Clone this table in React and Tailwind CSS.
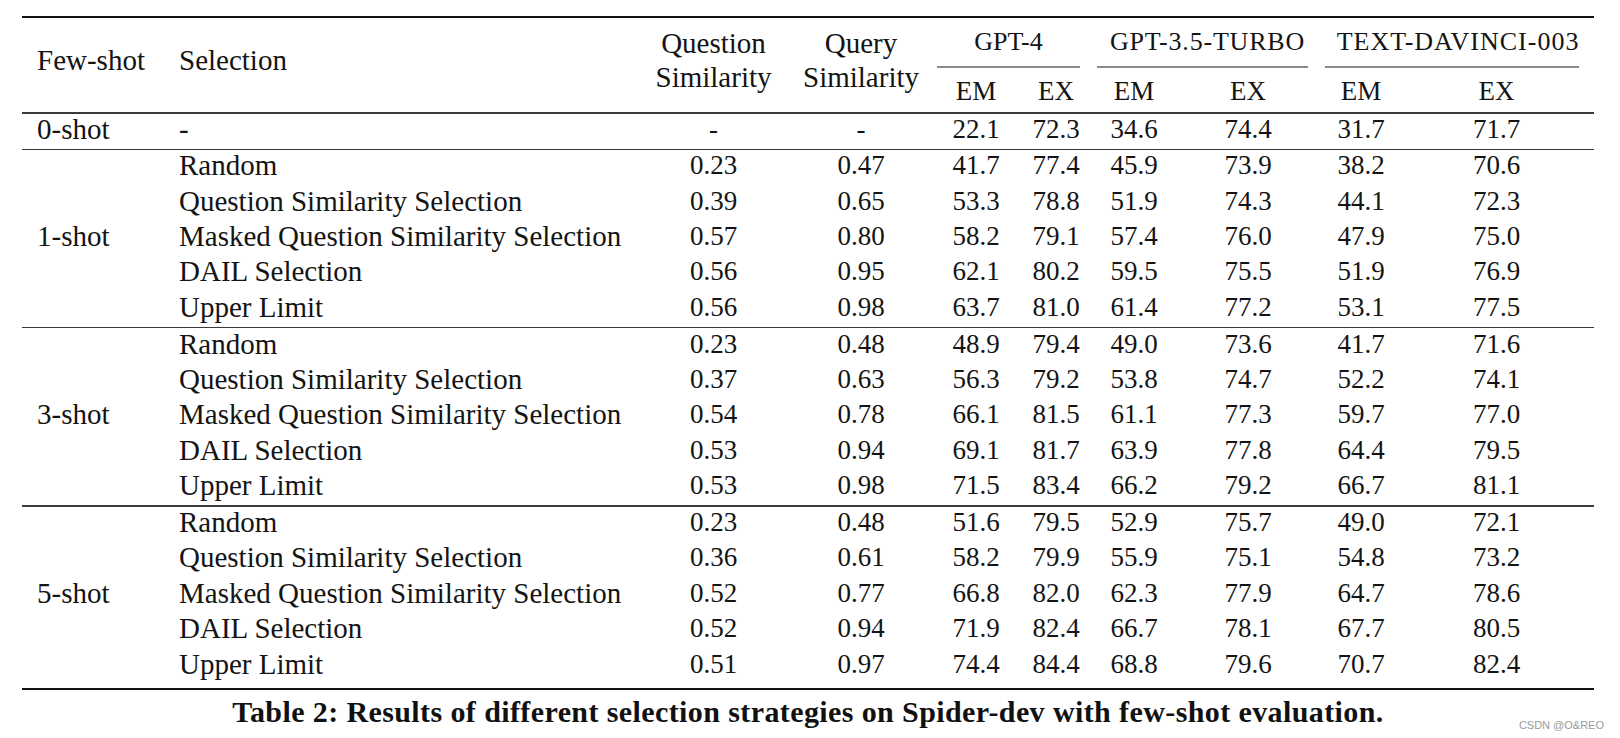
import React from "react";

const W = [143, 475, 147, 148, 82, 78, 78, 150, 76, 195];

const sections = [
  {
    label: "1-shot",
    rows: [
      ["Random", "0.23", "0.47", "41.7", "77.4", "45.9", "73.9", "38.2", "70.6"],
      ["Question Similarity Selection", "0.39", "0.65", "53.3", "78.8", "51.9", "74.3", "44.1", "72.3"],
      ["Masked Question Similarity Selection", "0.57", "0.80", "58.2", "79.1", "57.4", "76.0", "47.9", "75.0"],
      ["DAIL Selection", "0.56", "0.95", "62.1", "80.2", "59.5", "75.5", "51.9", "76.9"],
      ["Upper Limit", "0.56", "0.98", "63.7", "81.0", "61.4", "77.2", "53.1", "77.5"],
    ],
  },
  {
    label: "3-shot",
    rows: [
      ["Random", "0.23", "0.48", "48.9", "79.4", "49.0", "73.6", "41.7", "71.6"],
      ["Question Similarity Selection", "0.37", "0.63", "56.3", "79.2", "53.8", "74.7", "52.2", "74.1"],
      ["Masked Question Similarity Selection", "0.54", "0.78", "66.1", "81.5", "61.1", "77.3", "59.7", "77.0"],
      ["DAIL Selection", "0.53", "0.94", "69.1", "81.7", "63.9", "77.8", "64.4", "79.5"],
      ["Upper Limit", "0.53", "0.98", "71.5", "83.4", "66.2", "79.2", "66.7", "81.1"],
    ],
  },
  {
    label: "5-shot",
    rows: [
      ["Random", "0.23", "0.48", "51.6", "79.5", "52.9", "75.7", "49.0", "72.1"],
      ["Question Similarity Selection", "0.36", "0.61", "58.2", "79.9", "55.9", "75.1", "54.8", "73.2"],
      ["Masked Question Similarity Selection", "0.52", "0.77", "66.8", "82.0", "62.3", "77.9", "64.7", "78.6"],
      ["DAIL Selection", "0.52", "0.94", "71.9", "82.4", "66.7", "78.1", "67.7", "80.5"],
      ["Upper Limit", "0.51", "0.97", "74.4", "84.4", "68.8", "79.6", "70.7", "82.4"],
    ],
  },
];

function NumCells({ vals }) {
  return (
    <>
      {vals.map((v, i) => (
        <div
          key={i}
          style={{ width: W[i + 2] }}
          className="flex shrink-0 items-center justify-center text-[27px] leading-none"
        >
          {v}
        </div>
      ))}
    </>
  );
}

function DataRow({ row }) {
  return (
    <div className="flex h-[35.4px] items-center pb-[4px]">
      <div className="flex w-[475px] shrink-0 items-center whitespace-nowrap pl-[14px] text-[29px] leading-none">
        {row[0]}
      </div>
      <NumCells vals={row.slice(1)} />
    </div>
  );
}

function Group({ label, w1, w2, labelClass }) {
  return (
    <div className="flex shrink-0 flex-col" style={{ width: w1 + w2 }}>
      <div className={"ml-[2px] mr-[15px] flex h-[48px] items-center justify-center whitespace-nowrap leading-none " + labelClass}>
        {label}
      </div>
      <div className="ml-[2px] mr-[15px] h-[1.5px] bg-[#8a8a8a]" />
      <div className="flex h-[44.5px] items-center text-[27px] leading-none">
        <div className="flex shrink-0 justify-center pt-[4px]" style={{ width: w1 }}>EM</div>
        <div className="flex shrink-0 justify-center pt-[4px]" style={{ width: w2 }}>EX</div>
      </div>
    </div>
  );
}

export default function App() {
  return (
    <div className="relative h-[738px] w-[1620px] overflow-hidden bg-white font-['Liberation_Serif',serif] text-[#141414]">
      <div className="ml-[22px] w-[1572px] pt-[16px]">
        <div className="h-[2px] bg-[#111]" />
        {/* header */}
        <div className="flex h-[94px]">
          <div className="flex w-[143px] shrink-0 items-center pb-[9px] pl-[15px] text-[29px] leading-none">
            Few-shot
          </div>
          <div className="flex w-[475px] shrink-0 items-center pb-[9px] pl-[14px] text-[29px] leading-none">
            Selection
          </div>
          <div className="flex w-[147px] shrink-0 flex-col items-center pt-[8px] text-[29px] leading-[34px]">
            <span>Question</span>
            <span>Similarity</span>
          </div>
          <div className="flex w-[148px] shrink-0 flex-col items-center pt-[8px] text-[29px] leading-[34px]">
            <span>Query</span>
            <span>Similarity</span>
          </div>
          <Group label="GPT-4" w1={82} w2={78} labelClass="text-[26px]" />
          <Group label="GPT-3.5-TURBO" w1={78} w2={150} labelClass="text-[26px] tracking-[0.8px] pl-[10px]" />
          <Group label="TEXT-DAVINCI-003" w1={76} w2={195} labelClass="text-[26px] tracking-[1px] pl-[12px]" />
        </div>
        <div className="h-[1.5px] bg-[#3a3a3a]" />
        {/* 0-shot */}
        <div className="flex h-[35px] items-center pb-[4px]">
          <div className="flex w-[143px] shrink-0 items-center pl-[15px] text-[29px] leading-none">
            0-shot
          </div>
          <div className="flex w-[475px] shrink-0 items-center pl-[14px] text-[29px] leading-none">
            -
          </div>
          <NumCells vals={["-", "-", "22.1", "72.3", "34.6", "74.4", "31.7", "71.7"]} />
        </div>
        {sections.map((s, si) => (
          <div key={si}>
            <div className="h-[1.5px] bg-[#3a3a3a]" />
            <div className="flex">
              <div className="flex w-[143px] shrink-0 items-center pb-[4px] pl-[15px] text-[29px] leading-none">
                {s.label}
              </div>
              <div className="flex flex-col">
                {s.rows.map((r, ri) => (
                  <DataRow key={ri} row={r} />
                ))}
              </div>
            </div>
          </div>
        ))}
        <div className="h-[4px]" />
        <div className="h-[2px] bg-[#111]" />
        <div className="mt-[7px] whitespace-nowrap text-center text-[30px] font-bold leading-[30px] tracking-[0.4px] text-[#111]">
          Table 2: Results of different selection strategies on Spider-dev with few-shot evaluation.
        </div>
      </div>
      <div className="absolute bottom-[7px] right-[16px] font-['Liberation_Sans',sans-serif] text-[11px] leading-none text-[#9a9a9a]">
        CSDN @O&amp;REO
      </div>
    </div>
  );
}
